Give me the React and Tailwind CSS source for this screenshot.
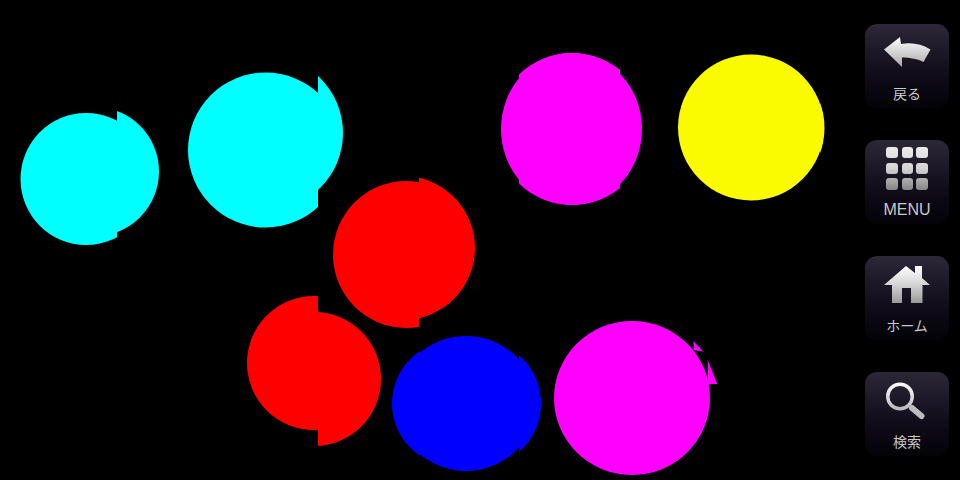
import React from 'react';

// Each blob is made of offset ellipses, cut at vertical lines: that makes the notches
const BLOBS = [
  { color: '#00ffff', parts: [
    { cx: 86, cy: 179, rx: 65.5, ry: 66, to: 117 },
    { cx: 94.4, cy: 171.5, rx: 64.6, ry: 64.6, from: 117 },
  ] },
  { color: '#00ffff', parts: [
    { cx: 265.5, cy: 150, rx: 77.5, ry: 77.5, to: 318 },
    { cx: 265.5, cy: 133, rx: 77.5, ry: 77.5, from: 318 },
  ] },
  { color: '#ff00ff', parts: [
    { cx: 571.5, cy: 129, rx: 70.5, ry: 76 },
    { cx: 572, cy: 129, rx: 76, ry: 76, from: 519, to: 620 },
  ] },
  { color: '#fafa00', parts: [
    { cx: 751, cy: 127.5, rx: 73, ry: 73 },
    { cx: 752, cy: 128, rx: 72.5, ry: 72.5, from: 820 },
  ] },
  { color: '#ff0000', parts: [
    { cx: 406, cy: 254.5, rx: 73, ry: 73.5, to: 419 },
    { cx: 403, cy: 248, rx: 72, ry: 72, from: 419 },
  ] },
  { color: '#ff0000', parts: [
    { cx: 314, cy: 363, rx: 67, ry: 67, to: 318 },
    { cx: 314, cy: 379, rx: 67, ry: 67, from: 318 },
  ] },
  { color: '#0000ff', parts: [
    { cx: 455, cy: 403.5, rx: 63, ry: 63, to: 420 },
    { cx: 466, cy: 403.5, rx: 70, ry: 67.5, from: 420, to: 519 },
    { cx: 476.5, cy: 403.5, rx: 64.5, ry: 64.5, from: 519 },
  ] },
  { color: '#ff00ff', parts: [
    { cx: 632, cy: 398, rx: 78, ry: 77 },
  ], spikes: ['693.3,341 703.3,351.7 694,350', '707.7,360 717.3,384 708,384'] },
];

const Blobs = () => (
  <svg width="865" height="480" viewBox="0 0 865 480" className="block">
    <defs>
      {BLOBS.map((blob, i) =>
        blob.parts.map((p, j) => (
          <clipPath key={`${i}-${j}`} id={`cut-${i}-${j}`}>
            <rect x={p.from ?? 0} y="0" width={(p.to ?? 865) - (p.from ?? 0)} height="480" />
          </clipPath>
        ))
      )}
    </defs>
    {BLOBS.map((blob, i) => (
      <g key={i} fill={blob.color}>
        {blob.parts.map((p, j) => (
          <ellipse key={j} cx={p.cx} cy={p.cy} rx={p.rx} ry={p.ry} clipPath={`url(#cut-${i}-${j})`} />
        ))}
        {blob.spikes && blob.spikes.map((points) => <polygon key={points} points={points} />)}
      </g>
    ))}
  </svg>
);

// Shared metal gradient, the coordinates are those of the 84x60 icon box
const Metal = ({ id, y1, y2, start = '#ffffff', end = '#8e8e8e' }) => (
  <defs>
    <linearGradient id={id} gradientUnits="userSpaceOnUse" x1="0" y1={y1} x2="0" y2={y2}>
      <stop offset="0" stopColor={start} />
      <stop offset="0.5" stopColor="#d4d4d4" />
      <stop offset="1" stopColor={end} />
    </linearGradient>
  </defs>
);

const BackIcon = () => (
  <>
    <Metal id="metal-back" y1="13" y2="43" end="#a8a8a8" />
    <path
      d="M19 25.5 L35 13 L36 20 C46 18 57 20 65.5 25.5 L58.5 38 C53 35 45 33.5 37 33.5 L37 43 Z"
      fill="url(#metal-back)"
    />
  </>
);

const GRID_X = [[21, 12], [37, 11], [51, 12]];
const GRID_Y = [[7, 11], [23, 11], [38, 12]];

const MenuIcon = () => (
  <>
    <Metal id="metal-menu" y1="7" y2="50" start="#ececec" end="#868686" />
    {GRID_Y.map(([y, h]) =>
      GRID_X.map(([x, w]) => (
        <rect key={`${x}-${y}`} x={x} y={y} width={w} height={h} rx="3" fill="url(#metal-menu)" />
      ))
    )}
  </>
);

const HomeIcon = () => (
  <>
    <Metal id="metal-home" y1="10" y2="47" end="#9a9a9a" />
    <path
      d="M41 10 L50 17 L50 10 L57 10 L57 22 L65 29 L57.5 29 L57.5 47 L46 47 L46 32 L37 32 L37 47 L27 47 L27 29 L19 29 Z"
      fill="url(#metal-home)"
    />
  </>
);

const SearchIcon = () => (
  <>
    <Metal id="metal-search" y1="10" y2="46" end="#a0a0a0" />
    <circle cx="35" cy="24.5" r="12.25" fill="none" stroke="url(#metal-search)" strokeWidth="3.5" />
    <path d="M47 36 L56.5 44" fill="none" stroke="#bcbcbc" strokeWidth="6" strokeLinecap="round" />
  </>
);

const RailButton = ({ label, latin, children }) => (
  <button className="flex flex-col items-center w-[84px] h-[84px] rounded-[12px] bg-gradient-to-b from-[#2c2838] via-[#120e1c] via-55% to-[#040308]">
    <svg width="84" height="60" viewBox="0 0 84 60" className="block shrink-0">
      {children}
    </svg>
    {latin ? (
      <span className="block h-5 leading-5 text-[#c8c8c8] text-base font-['Liberation_Sans',sans-serif]">
        {label}
      </span>
    ) : (
      <span className="block h-5 -mt-px leading-5 text-[#c8c8c8] text-sm font-['Noto_Sans_CJK_JP','Liberation_Sans',sans-serif]">
        {label}
      </span>
    )}
  </button>
);

export default function App() {
  return (
    <div className="flex w-[960px] h-[480px] overflow-hidden bg-black">
      <div className="w-[865px] h-full">
        <Blobs />
      </div>
      <div className="flex flex-col gap-8 pt-6">
        <RailButton label="戻る"><BackIcon /></RailButton>
        <RailButton label="MENU" latin><MenuIcon /></RailButton>
        <RailButton label="ホーム"><HomeIcon /></RailButton>
        <RailButton label="検索"><SearchIcon /></RailButton>
      </div>
    </div>
  );
}
